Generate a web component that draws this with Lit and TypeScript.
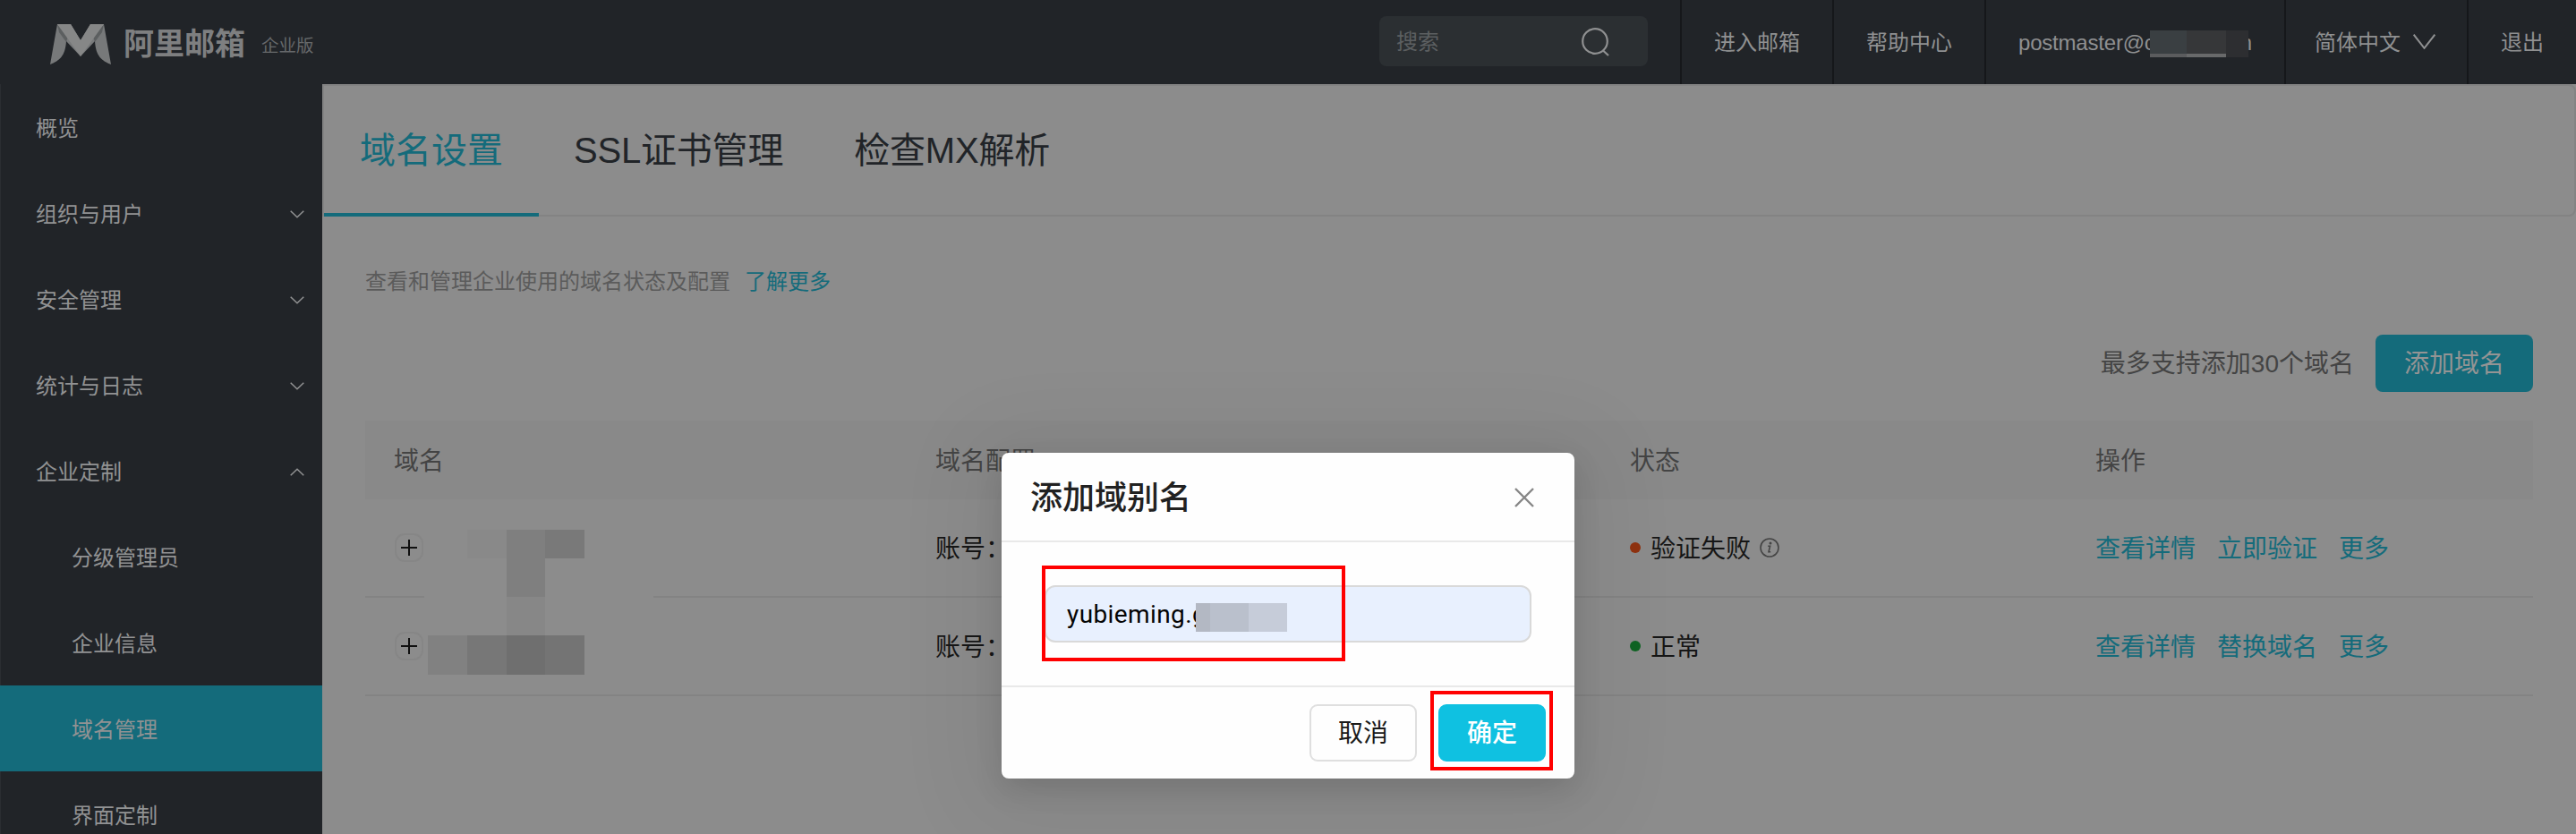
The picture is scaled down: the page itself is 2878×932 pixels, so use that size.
import { LitElement, html, css, svg } from "lit";
import { customElement } from "lit/decorators.js";
import { classMap } from "lit/directives/class-map.js";

interface MenuItem {
  label: string;
  state?: "open" | "closed";
  sub?: boolean;
  active?: boolean;
}

interface DomainRow {
  ok: boolean;
  status: string;
  actions: string[];
}

const MENU: MenuItem[] = [
  { label: "概览" },
  { label: "组织与用户", state: "closed" },
  { label: "安全管理", state: "closed" },
  { label: "统计与日志", state: "closed" },
  { label: "企业定制", state: "open" },
  { label: "分级管理员", sub: true },
  { label: "企业信息", sub: true },
  { label: "域名管理", sub: true, active: true },
  { label: "界面定制", sub: true },
];

const ROWS: DomainRow[] = [
  { ok: false, status: "验证失败", actions: ["查看详情", "立即验证", "更多"] },
  { ok: true, status: "正常", actions: ["查看详情", "替换域名", "更多"] },
];

const chevron = (w: number, h: number, up = false) => html`<svg
  width=${w}
  height=${h}
  viewBox="0 0 ${w} ${h}"
  fill="none"
  stroke="currentColor"
  stroke-width=${w > 20 ? 2 : 1.5}
>
  ${up
    ? svg`<path d="M0.7 ${h - 0.7} L${w / 2} 1.2 L${w - 0.7} ${h - 0.7}"></path>`
    : svg`<path d="M0.7 0.7 L${w / 2} ${h - 1.2} L${w - 0.7} 0.7"></path>`}
</svg>`;

@customElement("top-bar")
class TopBar extends LitElement {
  static styles = css`
    :host {
      display: flex;
      height: 94px;
      background: #212428;
      color: #8f9091;
      font-size: 24px;
      line-height: 36px;
    }
    .brand {
      display: flex;
      align-items: center;
      padding: 4px 0 0 56px;
      flex: 1;
    }
    .mark {
      display: block;
    }
    .name {
      margin-left: 14px;
      font-size: 34px;
      font-weight: 700;
      color: #7e7f80;
    }
    .edition {
      margin: 3px 0 0 18px;
      font-size: 19.5px;
      color: #66686a;
    }
    .search {
      display: flex;
      align-items: center;
      justify-content: space-between;
      box-sizing: border-box;
      width: 300px;
      height: 56px;
      margin: 18px 36px 0 0;
      padding: 2px 43px 0 19px;
      border-radius: 8px;
      background: #2b2f32;
      color: #5c5f61;
    }
    .cell {
      display: flex;
      align-items: center;
      box-sizing: border-box;
      padding: 1px 36px 0 36px;
      border-left: 2px solid #15171a;
      white-space: nowrap;
    }
    .account {
      position: relative;
      width: 335px;
      letter-spacing: -0.2px;
    }
    .user {
      width: 249px;
    }
    .mask {
      position: absolute;
      left: 183px;
      top: 34px;
      display: grid;
      grid-template-columns: 41px 44px 25px;
      grid-template-rows: 26px 4px;
    }
    .m1 { background: #3a3f42; }
    .m2 { background: #363739; }
    .m3 { background: #2d2e31; }
    .m4 { background: #5b5c5e; }
    .m5 { background: #68696a; }
    .lang {
      width: 204px;
      padding: 1px 0 0 32px;
      gap: 14px;
    }
    .lang svg {
      margin-top: -3px;
    }
  `;

  render() {
    return html`
      <div class="brand">
        <svg class="mark" width="68" height="45" viewBox="0 0 68 45">
          <path d="M8 0 H23 L34 18 L45 0 H60 L68 45 C58 41 51 36 50 19 L34 36 L18 19 C17 36 10 41 0 45 Z" fill="#77797a"></path>
          <path d="M8 0 L10 9 L18 20 L20 14 Z M60 0 L58 9 L50 20 L48 14 Z" fill="#5c5f60"></path>
          <path d="M8 0 H23 L34 18 L45 0 H60 L34 36 Z" fill="#868787"></path>
        </svg>
        <span class="name">阿里邮箱</span>
        <span class="edition">企业版</span>
      </div>
      <div class="search">
        <span>搜索</span>
        <svg width="31" height="32" viewBox="0 0 31 32" fill="none" stroke="#8f9091" stroke-width="2.2">
          <circle cx="15" cy="15" r="13.8"></circle>
          <path d="M24 25.5 L30 31"></path>
        </svg>
      </div>
      <div class="cell">进入邮箱</div>
      <div class="cell">帮助中心</div>
      <div class="cell account">
        <span class="user">postmaster@c</span><span>n</span>
        <div class="mask">
          <i class="m1"></i><i class="m2"></i><i class="m3"></i>
          <i class="m4"></i><i class="m5"></i><i class="m3"></i>
        </div>
      </div>
      <div class="cell lang"><span>简体中文</span>${chevron(25, 17)}</div>
      <div class="cell">退出</div>
    `;
  }
}

@customElement("side-menu")
class SideMenu extends LitElement {
  static styles = css`
    :host {
      display: block;
      box-sizing: border-box;
      width: 360px;
      background: #212428;
      border-left: 1px solid #2b2e32;
      color: #919293;
      font-size: 24px;
      line-height: 36px;
    }
    .item {
      display: flex;
      align-items: center;
      justify-content: space-between;
      box-sizing: border-box;
      height: 96px;
      padding: 3px 20px 0 39px;
    }
    .sub {
      padding-left: 79px;
    }
    .active {
      margin-left: -1px;
      padding-left: 80px;
      background: #146b7b;
    }
  `;

  render() {
    return MENU.map(
      (m) => html`<div class=${classMap({ item: true, sub: !!m.sub, active: !!m.active })}>
        <span>${m.label}</span>
        ${m.state ? chevron(16, 9, m.state === "open") : null}
      </div>`
    );
  }
}

@customElement("domain-page")
class DomainPage extends LitElement {
  static styles = css`
    :host {
      display: block;
      flex: 1;
      background: #8c8c8c;
      color: #161616;
      font-size: 28px;
      line-height: 42px;
    }
    .tabs {
      display: flex;
      box-sizing: border-box;
      height: 148px;
      border: 2px solid #838383;
      border-radius: 0 8px 8px 0;
      font-size: 40px;
      letter-spacing: -0.2px;
      color: #212428;
    }
    .tab {
      display: flex;
      align-items: center;
      box-sizing: border-box;
      height: 146px;
      padding: 0 40px 2px 39px;
    }
    .tab.on {
      width: 240px;
      padding: 2px 40px 0;
      color: #146b7b;
      border-bottom: 4px solid #146b7b;
      letter-spacing: 0;
    }
    .intro {
      display: flex;
      gap: 16px;
      padding: 55px 0 0 48px;
      font-size: 24px;
      line-height: 36px;
      color: #5b5b5b;
    }
    .link {
      color: #146b7b;
    }
    .tools {
      display: flex;
      align-items: center;
      justify-content: flex-end;
      gap: 24px;
      margin: 41px 48px 0 0;
      color: #444;
    }
    .limit {
      padding-top: 2px;
    }
    .add {
      padding: 12px 32px 10px;
      border-radius: 8px;
      background: #146b7b;
      color: #949494;
    }
    .table {
      position: relative;
      margin: 32px 48px 0 48px;
    }
    .row {
      display: grid;
      grid-template-columns: 605px 776px 520px 1fr;
      align-items: center;
      box-sizing: border-box;
      height: 110px;
      padding-left: 32px;
      border-bottom: 2px solid #838383;
    }
    .head {
      height: 88px;
      padding-top: 3px;
      border: 0;
      background: #898989;
      color: #444;
    }
    .plus {
      display: flex;
      align-items: center;
      justify-content: center;
      box-sizing: border-box;
      width: 32px;
      height: 32px;
      margin-left: 1px;
      border: 2px solid #868686;
      border-radius: 11px;
    }
    .status {
      display: flex;
      align-items: center;
    }
    .text {
      padding-top: 3px;
    }
    .dot {
      width: 12px;
      height: 12px;
      margin-right: 11px;
      border-radius: 50%;
      background: #8f3210;
    }
    .dot.ok {
      background: #0f6423;
    }
    .info {
      margin-left: 10px;
    }
    .acts {
      display: flex;
      gap: 24px;
      padding-top: 3px;
      color: #146b7b;
    }
    .mask {
      position: absolute;
      left: 66px;
      top: 122px;
      display: grid;
      grid-template-columns: 4px 44px 44px 43px 44px 77px;
      grid-template-rows: 32px 43px 43px 44px;
      background: #8c8c8c;
    }
    .t11 { grid-area: 1 / 3; background: #898989; }
    .t12 { grid-area: 1 / 4; background: #7f7f7f; }
    .t13 { grid-area: 1 / 5; background: #797979; }
    .t21 { grid-area: 2 / 4; background: #7f7f7f; }
    .t31 { grid-area: 3 / 4; background: #878787; }
    .t41 { grid-area: 4 / 2; background: #818181; }
    .t42 { grid-area: 4 / 3; background: #777777; }
    .t43 { grid-area: 4 / 4; background: #6f6f6f; }
    .t44 { grid-area: 4 / 5; background: #747474; }
  `;

  render() {
    return html`
      <nav class="tabs">
        <div class="tab on">域名设置</div>
        <div class="tab">SSL证书管理</div>
        <div class="tab">检查MX解析</div>
      </nav>
      <div class="intro">
        <span>查看和管理企业使用的域名状态及配置</span><span class="link">了解更多</span>
      </div>
      <div class="tools">
        <span class="limit">最多支持添加30个域名</span><span class="add">添加域名</span>
      </div>
      <div class="table">
        <div class="row head">
          <span>域名</span><span>域名配置</span><span>状态</span><span>操作</span>
        </div>
        ${ROWS.map(
          (r) => html`<div class="row">
            <span class="plus">
              <svg width="18" height="18" viewBox="0 0 18 18" stroke="#101010" stroke-width="2">
                <path d="M0 9 H18 M9 0 V18"></path>
              </svg>
            </span>
            <span class="text">账号：</span>
            <span class="status">
              <i class=${classMap({ dot: true, ok: r.ok })}></i><span class="text">${r.status}</span>
              ${r.ok
                ? null
                : html`<svg class="info" width="22" height="22" viewBox="0 0 22 22" fill="none" stroke="#444" stroke-width="1.6">
                    <circle cx="11" cy="11" r="10"></circle>
                    <path d="M9.2 9.2 H11.6 L10 15.8 H12.2"></path>
                    <circle cx="12" cy="6" r="0.7" fill="#444"></circle>
                  </svg>`}
            </span>
            <span class="acts">${r.actions.map((a) => html`<span>${a}</span>`)}</span>
          </div>`
        )}
        <div class="mask">
          <i class="t11"></i><i class="t12"></i><i class="t13"></i>
          <i class="t21"></i><i class="t31"></i>
          <i class="t41"></i><i class="t42"></i><i class="t43"></i><i class="t44"></i>
        </div>
      </div>
    `;
  }
}

@customElement("alias-dialog")
class AliasDialog extends LitElement {
  static styles = css`
    :host {
      display: block;
      position: absolute;
      left: 1119px;
      top: 506px;
      width: 640px;
      height: 364px;
      border-radius: 8px;
      background: #fefefe;
      box-shadow: 0 12px 32px rgba(0, 0, 0, 0.12), 0 12px 96px 32px rgba(0, 0, 0, 0.06);
      color: #1a1a1a;
      font-size: 28px;
      line-height: 42px;
    }
    .head {
      display: flex;
      align-items: center;
      justify-content: space-between;
      box-sizing: border-box;
      height: 100px;
      padding: 2px 45px 0 32px;
      border-bottom: 2px solid #e9e9e9;
      font-size: 36px;
      font-weight: 500;
      color: #212121;
    }
    .title {
      padding-top: 1px;
    }
    .body {
      height: 160px;
      padding: 48px 48px 0;
      box-sizing: border-box;
    }
    .field {
      display: flex;
      align-items: center;
      box-sizing: border-box;
      height: 64px;
      padding: 2px 0 0 23px;
      border: 2px solid #d9d9d9;
      border-radius: 12px;
      background: #e8f0fe;
      color: #050505;
      font-family: Roboto, "Noto Sans CJK SC", sans-serif;
      letter-spacing: 0.4px;
    }
    .foot {
      display: flex;
      justify-content: flex-end;
      gap: 24px;
      padding: 19px 32px 0 0;
      border-top: 2px solid #e9e9e9;
    }
    .btn {
      box-sizing: border-box;
      width: 120px;
      height: 64px;
      padding-top: 10px;
      border: 2px solid #dfdfdf;
      border-radius: 9px;
      text-align: center;
    }
    .primary {
      border-color: #0fc1e1;
      background: #0fc1e1;
      color: #fff;
      font-weight: 500;
    }
    .mask {
      position: absolute;
      left: 217px;
      top: 168px;
      display: grid;
      grid-template-columns: 16px 43px 43px;
      height: 32px;
    }
    .m1 { background: #b3b8c3; }
    .m2 { background: #bac0cc; }
    .m3 { background: #c6ccd9; }
    .frame {
      position: absolute;
      box-sizing: border-box;
      border: 4px solid #ff0000;
    }
    .frame-field {
      left: 45px;
      top: 126px;
      width: 339px;
      height: 107px;
    }
    .frame-ok {
      left: 479px;
      top: 266px;
      width: 137px;
      height: 89px;
    }
  `;

  render() {
    return html`
      <div class="head">
        <span class="title">添加域别名</span>
        <svg width="22" height="22" viewBox="0 0 22 22" stroke="#868686" stroke-width="2.4">
          <path d="M1 1 L21 21 M21 1 L1 21"></path>
        </svg>
      </div>
      <div class="body"><div class="field">yubieming.g</div></div>
      <div class="foot">
        <div class="btn">取消</div>
        <div class="btn primary">确定</div>
      </div>
      <div class="mask"><i class="m1"></i><i class="m2"></i><i class="m3"></i></div>
      <div class="frame frame-field"></div>
      <div class="frame frame-ok"></div>
    `;
  }
}

@customElement("app-root")
class AppRoot extends LitElement {
  static styles = css`
    :host {
      display: flex;
      flex-direction: column;
      position: relative;
      width: 2878px;
      height: 932px;
      overflow: hidden;
      font-family: "Liberation Sans", "Noto Sans CJK SC", sans-serif;
    }
    .main {
      display: flex;
      flex: 1;
      min-height: 0;
      overflow: hidden;
    }
  `;

  render() {
    return html`
      <top-bar></top-bar>
      <div class="main">
        <side-menu></side-menu>
        <domain-page></domain-page>
      </div>
      <alias-dialog></alias-dialog>
    `;
  }
}
